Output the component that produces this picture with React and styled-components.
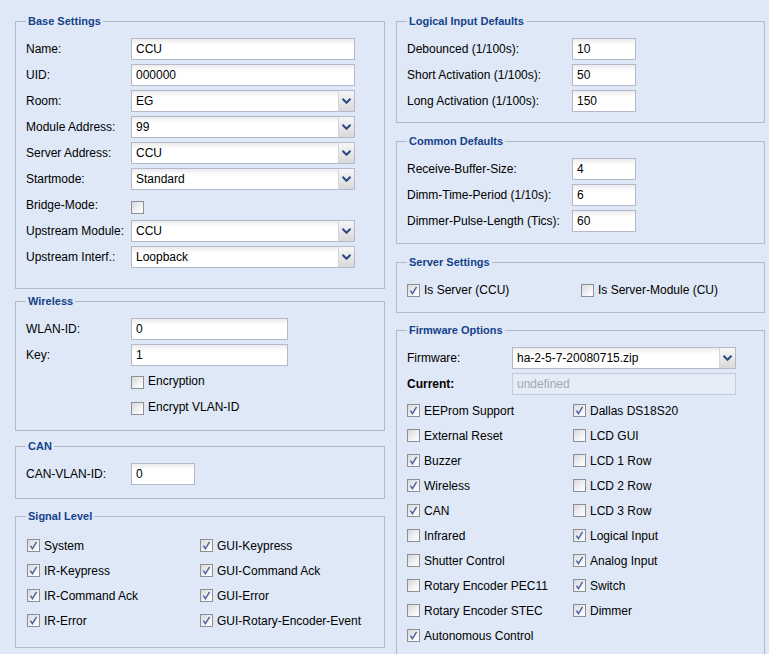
import React from 'react';
import styled, { createGlobalStyle } from 'styled-components';

const GlobalStyle = createGlobalStyle`
  html, body {
    margin: 0;
    padding: 0;
    overflow: hidden;
    background: #dfe8f6;
  }
  body {
    font-family: "Liberation Sans", Arial, sans-serif;
    font-size: 12px;
    color: #000;
  }
`;

const Page = styled.div`
  display: grid;
  grid-template-columns: 370px 369px;
  column-gap: 11px;
  align-items: start;
  padding: 15px 0 0 15px;
`;

const Column = styled.div`
  display: flex;
  flex-direction: column;
`;

const Fieldset = styled.fieldset`
  margin: ${p => p.$mt || 0}px 0 0;
  padding: 10px 10px ${p => p.$pb}px;
  border: 1px solid #b5b8c8;
  min-width: 0;
`;

const Legend = styled.legend`
  padding: 0 2px;
  font-size: 11px;
  line-height: 13px;
  font-weight: bold;
  color: #15428b;
`;

const Body = styled.div`
  display: flex;
  flex-direction: column;
  gap: 4px;
`;

const Row = styled.div`
  display: flex;
  align-items: center;
  height: 22px;
`;

const Label = styled.span`
  flex: none;
  width: ${p => p.$w}px;
  font-weight: ${p => (p.$bold ? 'bold' : 'normal')};
  white-space: nowrap;
`;

const TextField = styled.div`
  box-sizing: border-box;
  width: ${p => p.$w}px;
  height: 22px;
  display: flex;
  align-items: center;
  padding: 0 4px;
  border: 1px solid ${p => (p.$disabled ? '#c4cbd9' : '#b5b8c8')};
  background: ${p =>
    p.$disabled ? '#e6ecf6' : 'linear-gradient(to bottom, #ebebeb 0, #ffffff 6px)'};
  color: ${p => (p.$disabled ? '#a3a8b1' : '#000')};
  white-space: nowrap;
`;

const Combo = styled.div`
  display: flex;
  width: ${p => p.$w}px;
  height: 22px;
`;

const ComboText = styled(TextField)`
  flex: 1;
  width: auto;
  border-right: none;
`;

const Trigger = styled.div`
  box-sizing: border-box;
  flex: none;
  width: 17px;
  height: 22px;
  display: flex;
  align-items: center;
  justify-content: center;
  border: 1px solid #b5b8c8;
  border-left-color: #d4d6de;
  background: linear-gradient(to bottom, #f7f7f7, #d9d9d9);
`;

const Box = styled.span`
  box-sizing: border-box;
  flex: none;
  width: 13px;
  height: 13px;
  margin-top: ${p => p.$nudge || 0}px;
  display: inline-flex;
  align-items: center;
  justify-content: center;
  border: 1px solid #8d8f94;
  background: linear-gradient(135deg, #d6d7da 0%, #f0f1f2 55%, #ffffff 100%);
`;

const CheckItem = styled.div`
  display: flex;
  align-items: center;
  gap: 4px;
  height: ${p => p.$h || 21}px;
  white-space: nowrap;
`;

const CheckGrid = styled.div`
  display: grid;
  grid-template-columns: ${p => p.$col}px auto;
  grid-auto-rows: 21px;
  row-gap: 4px;
  margin-top: ${p => p.$mt || 0}px;
  padding-left: ${p => p.$pl || 0}px;
`;

const Chevron = () => (
  <svg width="9" height="6" viewBox="0 0 9 6">
    <path d="M0.5 0.8 L4.5 4.8 L8.5 0.8" fill="none" stroke="#2b4a86" strokeWidth="2" />
  </svg>
);

const Check = ({ checked, nudge }) => (
  <Box $nudge={nudge}>
    {checked && (
      <svg width="11" height="11" viewBox="0 0 11 11">
        <path d="M2.4 5.6 L4.4 8.6 L8.6 1.8" fill="none" stroke="#5264a0" strokeWidth="1.5" />
      </svg>
    )}
  </Box>
);

const CheckBox = ({ label, checked, h, nudge }) => (
  <CheckItem $h={h}>
    <Check checked={checked} nudge={nudge} />
    {label}
  </CheckItem>
);

const Input = ({ label, value, lw, w }) => (
  <Row>
    <Label $w={lw}>{label}</Label>
    <TextField $w={w}>{value}</TextField>
  </Row>
);

const Select = ({ label, value, lw, w }) => (
  <Row>
    <Label $w={lw}>{label}</Label>
    <Combo $w={w}>
      <ComboText>{value}</ComboText>
      <Trigger>
        <Chevron />
      </Trigger>
    </Combo>
  </Row>
);

const signals = [
  ['System', true], ['GUI-Keypress', true],
  ['IR-Keypress', true], ['GUI-Command Ack', true],
  ['IR-Command Ack', true], ['GUI-Error', true],
  ['IR-Error', true], ['GUI-Rotary-Encoder-Event', true],
];

const firmware = [
  ['EEProm Support', true], ['Dallas DS18S20', true],
  ['External Reset', false], ['LCD GUI', false],
  ['Buzzer', true], ['LCD 1 Row', false],
  ['Wireless', true], ['LCD 2 Row', false],
  ['CAN', true], ['LCD 3 Row', false],
  ['Infrared', false], ['Logical Input', true],
  ['Shutter Control', false], ['Analog Input', true],
  ['Rotary Encoder PEC11', false], ['Switch', true],
  ['Rotary Encoder STEC', false], ['Dimmer', true],
  ['Autonomous Control', true],
];

const App = () => {
  return (
    <>
      <GlobalStyle />
      <Page>
        <Column>
          <Fieldset $pb={20}>
            <Legend>Base Settings</Legend>
            <Body>
              <Input label="Name:" value="CCU" lw={105} w={224} />
              <Input label="UID:" value="000000" lw={105} w={224} />
              <Select label="Room:" value="EG" lw={105} w={224} />
              <Select label="Module Address:" value="99" lw={105} w={224} />
              <Select label="Server Address:" value="CCU" lw={105} w={224} />
              <Select label="Startmode:" value="Standard" lw={105} w={224} />
              <Row>
                <Label $w={105}>Bridge-Mode:</Label>
                <Check nudge={4} />
              </Row>
              <Select label="Upstream Module:" value="CCU" lw={105} w={224} />
              <Select label="Upstream Interf.:" value="Loopback" lw={105} w={224} />
            </Body>
          </Fieldset>

          <Fieldset $mt={6} $pb={12}>
            <Legend>Wireless</Legend>
            <Body>
              <Input label="WLAN-ID:" value="0" lw={105} w={157} />
              <Input label="Key:" value="1" lw={105} w={157} />
              <Row>
                <Label $w={105} />
                <CheckBox label="Encryption" h={22} nudge={2} />
              </Row>
              <Row>
                <Label $w={105} />
                <CheckBox label="Encrypt VLAN-ID" h={22} nudge={2} />
              </Row>
            </Body>
          </Fieldset>

          <Fieldset $mt={9} $pb={13}>
            <Legend>CAN</Legend>
            <Body>
              <Input label="CAN-VLAN-ID:" value="0" lw={105} w={64} />
            </Body>
          </Fieldset>

          <Fieldset $mt={11} $pb={16}>
            <Legend>Signal Level</Legend>
            <CheckGrid $col={173} $mt={2} $pl={1}>
              {signals.map(([label, checked]) => (
                <CheckBox key={label} label={label} checked={checked} />
              ))}
            </CheckGrid>
          </Fieldset>
        </Column>

        <Column>
          <Fieldset $pb={10}>
            <Legend>Logical Input Defaults</Legend>
            <Body>
              <Input label="Debounced (1/100s):" value="10" lw={165} w={64} />
              <Input label="Short Activation (1/100s):" value="50" lw={165} w={64} />
              <Input label="Long Activation (1/100s):" value="150" lw={165} w={64} />
            </Body>
          </Fieldset>

          <Fieldset $mt={12} $pb={11}>
            <Legend>Common Defaults</Legend>
            <Body>
              <Input label="Receive-Buffer-Size:" value="4" lw={165} w={64} />
              <Input label="Dimm-Time-Period (1/10s):" value="6" lw={165} w={64} />
              <Input label="Dimmer-Pulse-Length (Tics):" value="60" lw={165} w={64} />
            </Body>
          </Fieldset>

          <Fieldset $mt={12} $pb={12}>
            <Legend>Server Settings</Legend>
            <CheckGrid $col={174}>
              <CheckBox label="Is Server (CCU)" checked h={22} />
              <CheckBox label="Is Server-Module (CU)" h={22} />
            </CheckGrid>
          </Fieldset>

          <Fieldset $mt={11} $pb={10}>
            <Legend>Firmware Options</Legend>
            <Body>
              <Select label="Firmware:" value="ha-2-5-7-20080715.zip" lw={105} w={224} />
              <Row>
                <Label $w={105} $bold>Current:</Label>
                <TextField $w={224} $disabled>undefined</TextField>
              </Row>
            </Body>
            <CheckGrid $col={166} $mt={5}>
              {firmware.map(([label, checked]) => (
                <CheckBox key={label} label={label} checked={checked} />
              ))}
            </CheckGrid>
          </Fieldset>
        </Column>
      </Page>
    </>
  );
};

export default App;
